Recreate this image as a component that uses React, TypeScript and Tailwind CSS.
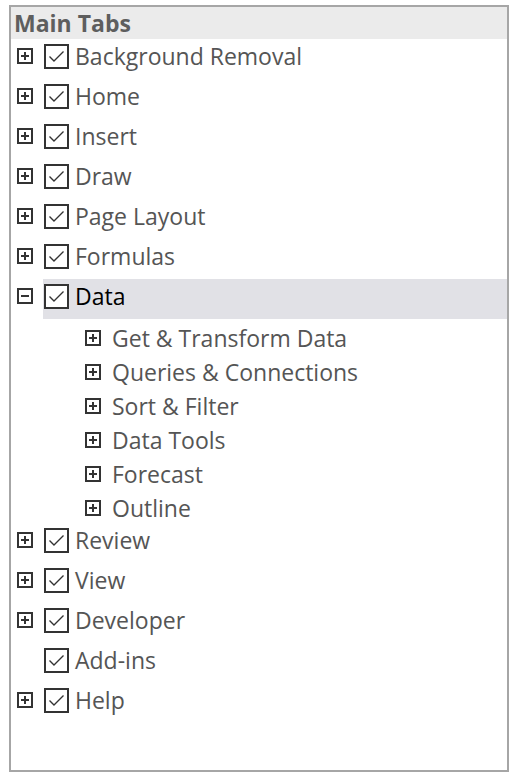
import React from "react";

const font = { fontFamily: '"Open Sans", "Noto Sans", sans-serif' };

function PlusBox({ minus = false }: { minus?: boolean }) {
  return (
    <svg width="16" height="16" viewBox="0 0 16 16" className="shrink-0">
      <rect x="1" y="1" width="14" height="14" fill="white" stroke="#333" strokeWidth="2" />
      <line x1="4" y1="8" x2="12" y2="8" stroke="#333" strokeWidth="2" />
      {!minus && <line x1="8" y1="4" x2="8" y2="12" stroke="#333" strokeWidth="2" />}
    </svg>
  );
}

function Check() {
  return (
    <svg width="25" height="25" viewBox="0 0 25 25" className="shrink-0">
      <rect x="1" y="1" width="23" height="23" fill="white" stroke="#333" strokeWidth="2" />
      <polyline points="5.5,12.5 10,17 19.5,7.5" fill="none" stroke="#333" strokeWidth="1.4" />
    </svg>
  );
}

function Row({ label, expand = "plus", active = false }: { label: string; expand?: "plus" | "minus" | "none"; active?: boolean }) {
  return (
    <div className="flex h-[40px]">
      <div className="w-[32px] pl-[6px] flex items-center pb-[6px]">
        {expand !== "none" && <PlusBox minus={expand === "minus"} />}
      </div>
      <div className={`flex-1 flex items-center h-full pl-[1px] pb-[6px] ${active ? "bg-[#e1e1e6]" : ""}`}>
        <Check />
        <span className={`ml-[6px] text-[23px] leading-none ${active ? "text-black" : "text-[#555]"}`}>{label}</span>
      </div>
    </div>
  );
}

function SubRow({ label }: { label: string }) {
  return (
    <div className="flex items-center h-[34px] pl-[74px] pt-[4px]">
      <PlusBox />
      <span className="ml-[11px] text-[23px] leading-none text-[#555]">{label}</span>
    </div>
  );
}

export default function App() {
  return (
    <div className="w-[515px] h-[779px] bg-white pt-[5px] pl-[9px]" style={font}>
      <div className="w-[500px] h-[767px] border-2 border-[#a6a6a6] bg-white">
        <div className="h-[32px] bg-[#ebebeb] flex items-center pl-[3px]">
          <span className="text-[23px] font-bold text-[#5e5e5e] leading-none">Main Tabs</span>
        </div>
        <Row label="Background Removal" />
        <Row label="Home" />
        <Row label="Insert" />
        <Row label="Draw" />
        <Row label="Page Layout" />
        <Row label="Formulas" />
        <Row label="Data" expand="minus" active />
        <SubRow label="Get & Transform Data" />
        <SubRow label="Queries & Connections" />
        <SubRow label="Sort & Filter" />
        <SubRow label="Data Tools" />
        <SubRow label="Forecast" />
        <SubRow label="Outline" />
        <Row label="Review" />
        <Row label="View" />
        <Row label="Developer" />
        <Row label="Add-ins" expand="none" />
        <Row label="Help" />
      </div>
    </div>
  );
}
